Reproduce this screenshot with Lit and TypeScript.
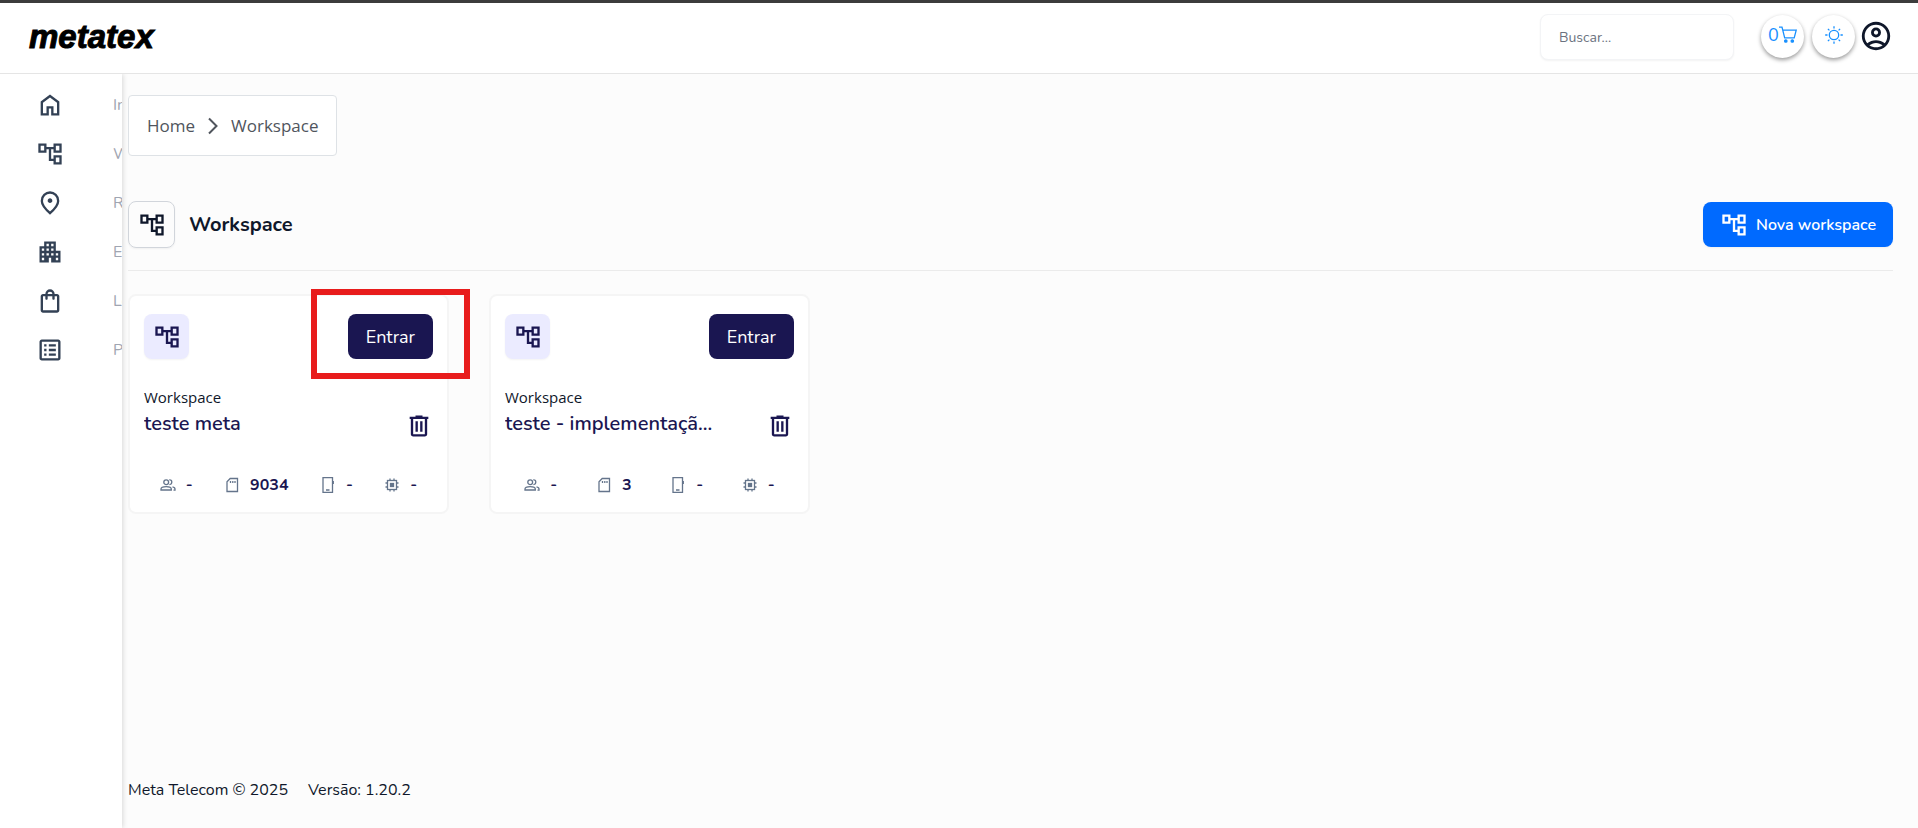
import { LitElement, html, css, svg } from "lit";
import { customElement, property } from "lit/decorators.js";

const fill = (d: string) => svg`<path fill="currentColor" d=${d}></path>`;

/* Glyphs drawn on a 960 grid whose origin is the bottom-left corner. */
const symbols: Record<string, unknown> = {
  home: fill("M240-200h120v-240h240v240h120v-360L480-740 240-560v360Zm-80 80v-480l320-240 320 240v480H520v-240h-80v240H160Z"),
  tree: fill("M880-520v-320H600v120H360v-120H80v320h280v-120h80v400h160v120h280v-320H600v120h-80v-320h80v120h280ZM280-600H160v-160h120v160Zm400 240h120v160H680v-160Zm0-400h120v160H680v-160Z"),
  pin: fill("M480-480q33 0 56.5-23.5T560-560q0-33-23.5-56.5T480-640q-33 0-56.5 23.5T400-560q0 33 23.5 56.5T480-480Zm0 294q122-112 181-203.5T720-552q0-109-69.5-178.5T480-800q-101 0-170.5 69.5T240-552q0 71 59 162.5T480-186Zm0 106Q319-217 239.5-334.5T160-552q0-150 96.5-239T480-880q127 0 223.5 89T800-552q0 100-79.5 217.5T480-80Z"),
  building: fill("M120-120v-560h160v-160h400v320h160v400H520v-160h-80v160H120Zm80-80h80v-80h-80v80Zm0-160h80v-80h-80v80Zm0-160h80v-80h-80v80Zm160 160h80v-80h-80v80Zm0-160h80v-80h-80v80Zm0-160h80v-80h-80v80Zm160 320h80v-80h-80v80Zm0-160h80v-80h-80v80Zm0-160h80v-80h-80v80Zm160 480h80v-80h-80v80Zm0-160h80v-80h-80v80Z"),
  bag: fill("M240-80q-33 0-56.5-23.5T160-160v-480q0-33 23.5-56.5T240-720h80q0-66 47-113t113-47q66 0 113 47t47 113h80q33 0 56.5 23.5T800-640v480q0 33-23.5 56.5T720-80H240Zm0-80h480v-480h-80v80q0 17-11.5 28.5T600-520q-17 0-28.5-11.5T560-560v-80H400v80q0 17-11.5 28.5T360-520q-17 0-28.5-11.5T320-560v-80h-80v480Zm160-560h160q0-33-23.5-56.5T480-800q-33 0-56.5 23.5T400-720Z"),
  list: fill("M200-120q-33 0-56.5-23.5T120-200v-560q0-33 23.5-56.5T200-840h560q33 0 56.5 23.5T840-760v560q0 33-23.5 56.5T760-120H200Zm0-80h560v-560H200v560ZM280-680h80v80h-80ZM280-520h80v80h-80ZM280-360h80v80h-80ZM440-680h240v80H440ZM440-520h240v80H440ZM440-360h240v80H440Z"),
  account: fill("M234-276q51-39 114-61.5T480-360q69 0 132 22.5T726-276q35-41 54.5-93T800-480q0-133-93.5-226.5T480-800q-133 0-226.5 93.5T160-480q0 59 19.5 111t54.5 93Zm246-164q-59 0-99.5-40.5T340-580q0-59 40.5-99.5T480-720q59 0 99.5 40.5T620-580q0 59-40.5 99.5T480-440Zm0 360q-83 0-156-31.5T197-197q-54-54-85.5-127T80-480q0-83 31.5-156T197-763q54-54 127-85.5T480-880q83 0 156 31.5T763-763q54 54 85.5 127T880-480q0 83-31.5 156T763-197q-54 54-127 85.5T480-80Zm0-80q53 0 100-15.5t86-44.5q-39-29-86-44.5T480-280q-53 0-100 15.5T294-220q39 29 86 44.5T480-160Zm0-360q26 0 43-17t17-43q0-26-17-43t-43-17q-26 0-43 17t-17 43q0 26 17 43t43 17Z"),
  trash: fill("M280-120q-33 0-56.5-23.5T200-200v-520h-40v-80h200v-40h240v40h200v80h-40v520q0 33-23.5 56.5T680-120H280Zm400-600H280v520h400v-520ZM360-280h80v-360h-80v360Zm160 0h80v-360h-80v360Z"),
};

/* Thin glyphs drawn with strokes on a 16 or 18 unit grid. */
const thin: Record<string, unknown> = {
  people: svg`<circle cx="6.200" cy="5.200" r="2.400"/><path d="M1 13v-1C1 10.300 3.800 9.700 6.200 9.700s5.100.6 5.100 2.300v1zM9.300 2.900c3-.7 3.600 4.300.1 4.700M12.500 9.900c1.800.4 2.500 1.200 2.500 2.200v1h-1.500"/>`,
  sim: svg`<path d="M6.200 1.500h7.300v13h-10.500v-9.800zM6.500 4v2M8.800 4v2M11 4v2"/>`,
  phone: svg`<path d="M3 .6h9.500v14.800H3zM6 13h3.500M13.300 4v3"/>`,
  chip: svg`<rect x="3.500" y="3.500" width="9" height="9"/><rect x="6.500" y="6.500" width="3" height="3" fill="currentColor"/><path d="M6 1.500v2M10 1.500v2M6 12.500v2M10 12.500v2M1.500 6h2M1.500 10h2M12.500 6h2M12.500 10h2"/>`,
  cart: svg`<path d="M0 1.200h3l2.700 10.600h9.500l2-7.700H4"/><circle cx="6.800" cy="15" r="1.200" fill="currentColor"/><circle cx="13.300" cy="15" r="1.200" fill="currentColor"/>`,
  sun: svg`<circle cx="9" cy="9" r="4.700"/><path d="M9 .2v2.300M9 15.500v2.300M.2 9h2.300M15.500 9h2.300M2.900 2.900l1.500 1.500M13.600 13.600l1.500 1.500M2.900 15.100l1.500-1.500M13.600 4.400l1.500-1.500"/>`,
  chevron: svg`<path stroke-width="2" d="M5 1.500l7.500 7.500-7.500 7.500"/>`,
};

@customElement("ui-icon")
export class UiIcon extends LitElement {
  @property() name = "";
  static styles = css`
    :host { display: inline-flex; flex: none; width: 28px; height: 28px; }
    svg { width: 100%; height: 100%; display: block; overflow: visible; }
  `;
  render() {
    if (this.name in symbols) {
      return html`<svg viewBox="0 -960 960 960" aria-hidden="true">${symbols[this.name]}</svg>`;
    }
    const grid = ["cart", "sun", "chevron"].includes(this.name) ? "0 0 18 18" : "0 0 16 16";
    return html`<svg viewBox=${grid} fill="none" stroke="currentColor" stroke-width="1.3" aria-hidden="true">${thin[this.name]}</svg>`;
  }
}

@customElement("workspace-card")
export class WorkspaceCard extends LitElement {
  @property() name = "";
  @property() sims = "";
  static styles = css`
    :host { display: block; box-sizing: border-box; border: 2px solid #f5f5f5; border-radius: 8px; background: #fff; padding: 18px 14px 11px; }
    .top, .stats, .stat { display: flex; align-items: center; }
    .top, .row { display: flex; justify-content: space-between; }
    .badge { display: grid; place-items: center; width: 45px; height: 45px; border-radius: 8px; background: #ebebff; box-shadow: 0 1px 2px #0000000d; color: #1a1651; }
    .enter { height: 45px; padding: 0 18px; border: 0; border-radius: 8px; background: #1a1651; color: #fff; font: 400 18px/24px "Nunito", "Noto Sans", sans-serif; }
    .kind { margin: 27px 0 0; font-size: 15px; line-height: 22px; color: #0f172a; }
    .name { margin: 0; padding-top: 2px; flex: 1; max-width: 216px; overflow: hidden; white-space: nowrap; text-overflow: ellipsis; font: 600 20px/28px "Nunito", "Noto Sans", sans-serif; color: #1a1651; }
    .remove { display: flex; padding: 4px 0 0; margin: 0; border: 0; background: none; color: #1a1651; }
    .stats { justify-content: space-around; margin: 29px 0 0; padding: 0; list-style: none; font: 700 16px/32px "Nunito", "Noto Sans", sans-serif; color: #1a1651; }
    .stat { gap: 10px; }
    .stat ui-icon { width: 16px; height: 16px; color: #64748b; }
  `;
  render() {
    const stats = [["people", "-"], ["sim", this.sims], ["phone", "-"], ["chip", "-"]];
    return html`
      <div class="top">
        <span class="badge"><ui-icon name="tree"></ui-icon></span>
        <button class="enter">Entrar</button>
      </div>
      <p class="kind">Workspace</p>
      <div class="row">
        <h2 class="name">${this.name}</h2>
        <button class="remove" aria-label="Excluir"><ui-icon name="trash"></ui-icon></button>
      </div>
      <ul class="stats">
        ${stats.map(([icon, value]) => html`<li class="stat"><ui-icon name=${icon}></ui-icon><span>${value}</span></li>`)}
      </ul>
    `;
  }
}

@customElement("app-root")
export class AppRoot extends LitElement {
  static styles = css`
    * { box-sizing: border-box; }
    :host { display: flex; flex-direction: column; min-height: 100vh; background: #fcfcfc; color: #0f172a; font-family: "Segoe UI", "Open Sans", sans-serif; }
    a { color: inherit; text-decoration: none; }
    header { display: flex; align-items: center; border-top: 3px solid #3c3c3c; border-bottom: 1px solid #e5e5e5; background: #fff; height: 74px; padding: 0 25px 4px 29px; }
    .logo { margin: 2px auto 0 0; font: italic 700 33px/40px "Liberation Sans", Arial, sans-serif; color: #000; -webkit-text-stroke: 1px #000; }
    .search { width: 194px; height: 46px; margin: 2px 27px 0 0; padding: 0 18px; border: 1px solid #f3f4f6; border-radius: 8px; outline: 0; background: #fff; box-shadow: 0 1px 2px #0000000d; font: 400 14px/20px "Nunito", "Noto Sans", sans-serif; }
    .search::placeholder { color: #6b7280; opacity: 1; }
    .round { display: flex; align-items: center; justify-content: center; width: 43px; height: 43px; margin-right: 8px; padding: 0 0 2px; border: 0; border-radius: 50%; background: #fff; box-shadow: 0 2px 4px #00000066; color: #1890ff; font: 400 18px/24px "Nunito", "Open Sans", sans-serif; }
    .round ui-icon { width: 18px; height: 18px; }
    .user { display: flex; padding: 0; margin-left: -4px; border: 0; background: none; color: #0f172a; }
    .user ui-icon { width: 34px; height: 34px; }
    .body { display: flex; flex: 1; }
    nav { flex: none; width: 122px; overflow: hidden; padding-top: 6px; background: #fff; box-shadow: 1px 0 5px #00000026; clip-path: inset(0 -8px 0 0); }
    .item { display: flex; align-items: center; gap: 49px; height: 49px; padding-left: 36px; white-space: nowrap; color: #334155; }
    .item span { font: 400 16px/24px "Nunito", "Noto Sans", sans-serif; color: #a0a5b1; }
    main { display: flex; flex-direction: column; flex: 1; min-width: 0; padding: 21px 25px 24px 6px; }
    .crumbs { display: flex; align-items: center; align-self: flex-start; gap: 9px; height: 61px; padding: 0 17px 0 18px; border: 1px solid #dee2e6; border-radius: 4px; background: #fff; color: #50555d; font-size: 17px; font-weight: 400; line-height: 24px; }
    .crumbs ui-icon { width: 18px; height: 18px; }
    .head { display: flex; align-items: center; gap: 14px; margin-top: 45px; padding-bottom: 22px; border-bottom: 1px solid #ebebeb; }
    .box { display: grid; place-items: center; width: 47px; height: 47px; border: 1px solid #d1d5db; border-radius: 8px; box-shadow: 0 1px 2px #0000000d; }
    h1 { margin: 0 auto 0 0; font: 700 20px/28px "Nunito", "Noto Sans", sans-serif; }
    .new { display: flex; align-items: center; gap: 8px; height: 45px; padding: 0 17px; border: 0; border-radius: 8px; background: #006aff; box-shadow: 0 1px 2px #0000000d; color: #fff; font: 600 16px/24px "Nunito", "Noto Sans", sans-serif; }
    .cards { display: grid; grid-template-columns: repeat(auto-fill, 321px); gap: 40px; padding: 23px 0 40px; }
    .spot { position: relative; }
    .mark { position: absolute; top: -5px; right: -21px; width: 159px; height: 90px; border: 6px solid #e81c1c; pointer-events: none; }
    footer { display: flex; gap: 20px; margin-top: auto; font: 400 16px/28px "Nunito", "Noto Sans", sans-serif; }
  `;
  render() {
    const items = [["home", "Início"], ["tree", "Workspace"], ["pin", "Rastreio"], ["building", "Empresas"], ["bag", "Loja"], ["list", "Pedidos"]];
    return html`
      <header>
        <a class="logo" href="#">metatex</a>
        <input class="search" type="search" aria-label="Buscar" placeholder="Buscar..." />
        <button class="round" aria-label="Carrinho">0<ui-icon name="cart"></ui-icon></button>
        <button class="round" aria-label="Tema"><ui-icon name="sun"></ui-icon></button>
        <button class="user" aria-label="Conta"><ui-icon name="account"></ui-icon></button>
      </header>
      <div class="body">
        <nav>${items.map(([icon, text]) => html`<a class="item" href="#"><ui-icon name=${icon}></ui-icon><span>${text}</span></a>`)}</nav>
        <main>
          <div class="crumbs"><a href="#">Home</a><ui-icon name="chevron"></ui-icon><a href="#">Workspace</a></div>
          <div class="head">
            <span class="box"><ui-icon name="tree"></ui-icon></span>
            <h1>Workspace</h1>
            <button class="new"><ui-icon name="tree"></ui-icon>Nova workspace</button>
          </div>
          <div class="cards">
            <div class="spot"><workspace-card name="teste meta" sims="9034"></workspace-card><div class="mark"></div></div>
            <workspace-card name="teste - implementaçã..." sims="3"></workspace-card>
          </div>
          <footer><span>Meta Telecom © 2025</span><span>Versão: 1.20.2</span></footer>
        </main>
      </div>
    `;
  }
}
